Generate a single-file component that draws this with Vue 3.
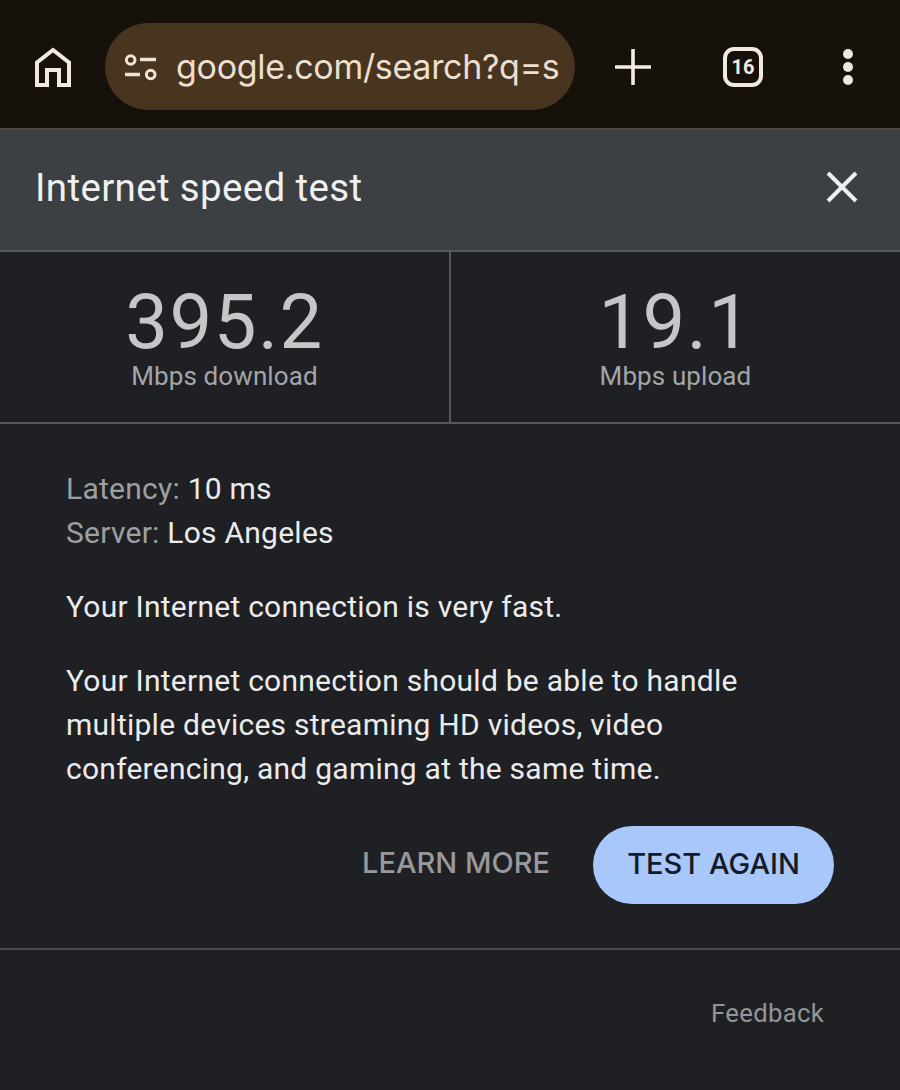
<template>
  <div class="page">
    <header class="toolbar">
      <svg class="home" width="40" height="40" viewBox="0 0 40 40">
        <path d="M4 38 V15.500 L20 3 L36 15.500 V38 H26 V23 H14 V38 Z" fill="none" stroke="#f2e9e0" stroke-width="4" stroke-linejoin="miter" />
      </svg>
      <div class="omnibox">
        <svg class="tune" width="36" height="30" viewBox="0 0 36 30">
          <circle cx="7.700" cy="8" r="4.300" fill="none" stroke="#f0e4d4" stroke-width="3" />
          <path d="M17 7.500 H33" stroke="#f0e4d4" stroke-width="3.400" />
          <path d="M2 22.500 H17" stroke="#f0e4d4" stroke-width="3.400" />
          <circle cx="27.700" cy="22.500" r="4.300" fill="none" stroke="#f0e4d4" stroke-width="3" />
        </svg>
        <span class="url">google.com/search?q=s</span>
      </div>
      <svg class="plus" width="36" height="36" viewBox="0 0 36 36">
        <path d="M18 1 V35 M1 18 H35" stroke="#f5ece3" stroke-width="3.600" stroke-linecap="round" />
      </svg>
      <div class="tabs">16</div>
      <div class="more">
        <i></i><i></i><i></i>
      </div>
    </header>

    <div class="title-bar">
      <span class="title">Internet speed test</span>
      <svg class="close" width="32" height="32" viewBox="0 0 32 32">
        <path d="M2 2 L30 30 M30 2 L2 30" stroke="#eef1f3" stroke-width="4" />
      </svg>
    </div>

    <section class="speeds">
      <div v-for="s in speeds" :key="s.label" class="speed">
        <div class="value">{{ s.value }}</div>
        <div class="label">{{ s.label }}</div>
      </div>
    </section>

    <section class="results">
      <p class="meta"><span>Latency:</span> 10 ms<br /><span>Server:</span> Los Angeles</p>
      <p>Your Internet connection is very fast.</p>
      <p>Your Internet connection should be able to handle<br />multiple devices streaming HD videos, video<br />conferencing, and gaming at the same time.</p>
      <div class="actions">
        <button class="learn">LEARN MORE</button>
        <button class="again">TEST AGAIN</button>
      </div>
    </section>

    <footer class="feedback">Feedback</footer>
  </div>
</template>

<script setup>
const speeds = [
  { value: '395.2', label: 'Mbps download' },
  { value: '19.1', label: 'Mbps upload' }
]
</script>

<style>
html, body {
  margin: 0;
  background: #1f2023;
}
</style>

<style scoped>
.page {
  width: 900px;
  height: 1090px;
  overflow: hidden;
  background: #1f2023;
  font-family: Roboto, "Liberation Sans", sans-serif;
  color: #e9eaeb;
}

/* browser bar */
.toolbar {
  height: 130px;
  box-sizing: border-box;
  background: #17110b;
  border-bottom: 2px solid #4f4a42;
  display: flex;
  align-items: center;
  padding: 5px 0 0 33px;
}
.home {
  flex: none;
}
.omnibox {
  flex: none;
  margin-left: 32px;
  width: 470px;
  height: 87px;
  box-sizing: border-box;
  border-radius: 44px;
  background: #48351f;
  display: flex;
  align-items: center;
  padding-left: 18px;
  overflow: hidden;
}
.tune {
  flex: none;
}
.url {
  margin-left: 17px;
  font-family: Inter, Roboto, sans-serif;
  font-size: 34px;
  letter-spacing: -0.3px;
  color: #ecdfd0;
  white-space: nowrap;
}
.plus {
  flex: none;
  margin-left: 40px;
}
.tabs {
  flex: none;
  margin-left: 72px;
  width: 40px;
  height: 40px;
  box-sizing: border-box;
  border: 4px solid #f2e9e0;
  border-radius: 11px;
  display: flex;
  align-items: center;
  justify-content: center;
  font-size: 20px;
  font-weight: 700;
  color: #f2e9e0;
}
.more {
  flex: none;
  margin-left: 80px;
  display: flex;
  flex-direction: column;
  gap: 3px;
}
.more i {
  width: 10px;
  height: 10px;
  border-radius: 50%;
  background: #efe6dc;
}

/* title */
.title-bar {
  height: 122px;
  box-sizing: border-box;
  background: #3c4043;
  border-bottom: 2px solid #55585b;
  display: flex;
  align-items: center;
  justify-content: space-between;
  padding: 0 42px 6px 36px;
}
.title {
  font-size: 38.500px;
  letter-spacing: 0.35px;
  margin-left: -1px;
  color: #eef0f1;
}

/* numbers */
.speeds {
  height: 172px;
  box-sizing: border-box;
  border-bottom: 2px solid #55585a;
  display: flex;
}
.speed {
  flex: 1;
  text-align: center;
  padding-top: 35px;
}
.speed + .speed {
  border-left: 2px solid #55585a;
}
.value {
  font-size: 76px;
  line-height: 70px;
  letter-spacing: 1.500px;
  color: #c4c6c8;
}
.label {
  margin-top: 3px;
  font-size: 26px;
  line-height: 32px;
  letter-spacing: 0.1px;
  color: #a3a5a8;
}

/* details */
.results {
  height: 526px;
  box-sizing: border-box;
  border-bottom: 2px solid #4b4d50;
  padding: 43px 66px 0;
  font-size: 30px;
  line-height: 44px;
  letter-spacing: 0.25px;
  color: #eaebec;
}
.results p {
  margin: 0 0 30px;
}
.meta span {
  color: #9da0a3;
}
.actions {
  display: flex;
  justify-content: flex-end;
  align-items: center;
  margin-top: 35px;
}
.actions button {
  border: none;
  background: none;
  font-family: Inter, Roboto, sans-serif;
  font-size: 29px;
  font-weight: 500;
  padding: 0 0 3px;
}
.actions .learn {
  color: #98999c;
  margin-right: 43px;
  padding-bottom: 6px;
}
.actions .again {
  width: 241px;
  height: 78px;
  border-radius: 39px;
  background: #a8c7fa;
  color: #141a26;
}

.feedback {
  padding: 48px 76px 0 0;
  text-align: right;
  font-size: 25.700px;
  letter-spacing: 0.3px;
  color: #939598;
}
</style>
